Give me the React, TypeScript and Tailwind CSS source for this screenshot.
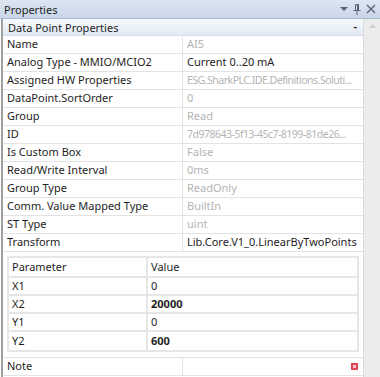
import React from "react";

const rows: [string, string, "gray" | "black", boolean][] = [
  ["Name", "AI5", "gray", false],
  ["Analog Type - MMIO/MCIO2", "Current 0..20 mA", "black", false],
  ["Assigned HW Properties", "ESG.SharkPLC.IDE.Definitions.Soluti...", "gray", true],
  ["DataPoint.SortOrder", "0", "gray", false],
  ["Group", "Read", "gray", false],
  ["ID", "7d978643-5f13-45c7-8199-81de26...", "gray", true],
  ["Is Custom Box", "False", "gray", false],
  ["Read/Write Interval", "0ms", "gray", false],
  ["Group Type", "ReadOnly", "gray", false],
  ["Comm. Value Mapped Type", "BuiltIn", "gray", false],
  ["ST Type", "uint", "gray", false],
  ["Transform", "Lib.Core.V1_0.LinearByTwoPoints", "black", false],
];

const params: [string, string, boolean][] = [
  ["X1", "0", false],
  ["X2", "20000", true],
  ["Y1", "0", false],
  ["Y2", "600", true],
];

export default function App() {
  return (
    <div
      className="w-[380px] h-[377px] bg-white flex flex-col overflow-hidden text-[11px] text-[#1e1e1e]"
      style={{ fontFamily: '"Noto Sans", "Open Sans", sans-serif' }}
    >
      {/* Title bar */}
      <div className="h-[19px] shrink-0 flex items-center justify-between pl-[4px] pr-[4px] bg-gradient-to-b from-[#dde6f2] to-[#c9d6e9] border-b border-[#a9b9d0]">
        <span className="leading-none">Properties</span>
        <div className="flex items-center gap-[5px]">
          <svg width="8" height="6" viewBox="0 0 8 6">
            <path d="M0 1 L8 1 L4 5 Z" fill="#5a6478" />
          </svg>
          <svg width="8" height="11" viewBox="0 0 8 11">
            <path d="M2.5 0.5 H5.5 V6.5 M2.5 0.5 V6.5 M0.5 6.5 H7.5 M4 6.5 V11 M4.5 1 V6" fill="none" stroke="#5a6478" strokeWidth="1" />
          </svg>
          <svg width="10" height="10" viewBox="0 0 10 10">
            <path d="M1 1 L9 9 M9 1 L1 9" stroke="#5a6478" strokeWidth="1.4" />
          </svg>
        </div>
      </div>

      <div className="flex flex-1 min-h-0">
        {/* Main area */}
        <div className="flex-1 min-w-0 flex flex-col border-l-[2px] border-[#a0a0a0] ml-[1px]">
          {/* Category */}
          <div className="h-[17px] shrink-0 flex items-center justify-between pl-[5px] pr-[6px] bg-gradient-to-b from-[#f7f9fc] to-[#e2eaf5] border-b border-[#d6dde8]">
            <span className="leading-none">Data Point Properties</span>
            <span className="leading-none font-bold text-[11px] -mt-[4px]">-</span>
          </div>

          {rows.map(([k, v, c, narrow]) => (
            <div key={k} className="h-[18px] shrink-0 flex border-b border-[#e3e3e3]">
              <div className="w-[180px] shrink-0 pl-[4px] flex items-center border-r border-[#e3e3e3] whitespace-nowrap overflow-hidden">
                {k}
              </div>
              <div
                className={`flex-1 min-w-0 pl-[4px] flex items-center whitespace-nowrap overflow-hidden ${
                  c === "gray" ? "text-[#b4b4b4]" : "text-[#1e1e1e]"
                } ${narrow ? "text-[10.5px] tracking-[-0.5px]" : ""}`}
              >
                {v}
              </div>
            </div>
          ))}

          {/* Nested table */}
          <div className="pt-[4px] pl-[4px] pr-[4px] pb-[5px] border-b border-[#e3e3e3]">
            <div className="border-2 border-[#e6e6e6]">
              <div className="h-[20px] flex border-b-2 border-[#e6e6e6]">
                <div className="w-[139px] pl-[3px] flex items-center border-r-2 border-[#e6e6e6]">Parameter</div>
                <div className="flex-1 pl-[3px] flex items-center">Value</div>
              </div>
              {params.map(([k, v, b], i) => (
                <div
                  key={k}
                  className={`h-[18px] flex ${i < params.length - 1 ? "border-b-2 border-[#e6e6e6]" : ""}`}
                >
                  <div className="w-[139px] pl-[3px] flex items-center border-r-2 border-[#e6e6e6]">{k}</div>
                  <div className={`flex-1 pl-[3px] flex items-center ${b ? "font-bold" : ""}`}>{v}</div>
                </div>
              ))}
            </div>
          </div>

          {/* Note */}
          <div className="h-[18px] shrink-0 flex border-b border-[#e3e3e3]">
            <div className="w-[180px] shrink-0 pl-[4px] flex items-center border-r border-[#e3e3e3]">Note</div>
            <div className="flex-1 flex items-center justify-end pr-[5px]">
              <div className="w-[7px] h-[7px] bg-[#e04a55] flex items-center justify-center">
                <div className="w-[3px] h-[3px] bg-[#f6c6ca]" />
              </div>
            </div>
          </div>
          <div className="flex-1" />
        </div>

        {/* Scrollbar */}
        <div className="w-[17px] shrink-0 bg-[#ececec] border-l border-[#dadada] flex flex-col items-center pt-[5px]">
          <svg width="7" height="4" viewBox="0 0 7 4">
            <path d="M0 4 L3.5 0 L7 4 Z" fill="#cfcfcf" />
          </svg>
        </div>
      </div>
    </div>
  );
}
